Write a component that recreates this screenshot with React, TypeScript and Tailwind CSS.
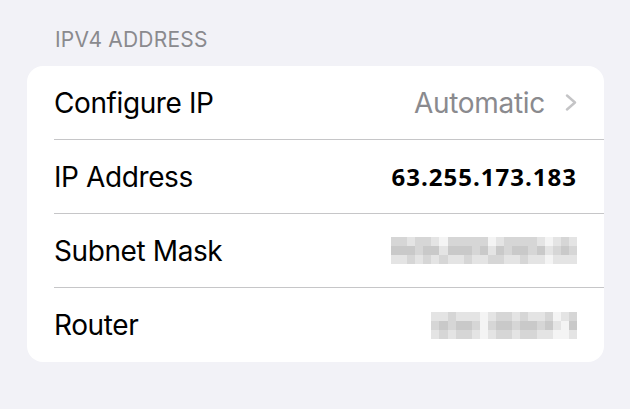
import React from "react";

const shade: Record<number, string> = {
  0: "bg-[#f4f4f4]",
  1: "bg-[#e4e4e4]",
  2: "bg-[#d6d6d6]",
  3: "bg-[#c9c9c9]",
};

const subnet = [
  [2, 2, 1, 2, 2, 1, 0, 2, 2, 2, 2, 2, 0, 1, 2, 2, 2, 2, 1, 0, 1, 2, 1],
  [3, 3, 3, 2, 3, 3, 1, 3, 3, 3, 2, 3, 1, 3, 2, 3, 3, 2, 3, 1, 2, 3, 2],
  [1, 1, 2, 1, 2, 1, 2, 1, 1, 2, 1, 1, 2, 2, 1, 1, 2, 1, 1, 0, 1, 1, 1],
];

const router = [
  [1, 1, 2, 1, 1, 1, 0, 1, 2, 2, 1, 2, 1, 1, 2, 0, 1, 2],
  [2, 3, 2, 3, 3, 2, 0, 2, 3, 3, 2, 3, 3, 2, 3, 1, 0, 3],
  [1, 2, 1, 2, 2, 1, 0, 1, 2, 2, 1, 2, 2, 1, 1, 0, 0, 1],
];

function Mosaic({ data }: { data: number[][] }) {
  return (
    <div className="flex flex-col">
      {data.map((row, r) => (
        <div key={r} className="flex">
          {row.map((v, c) => (
            <div key={c} className={`h-[9px] w-[8.1px] ${shade[v]}`} />
          ))}
        </div>
      ))}
    </div>
  );
}

function Row({
  label,
  children,
  last,
}: {
  label: string;
  children: React.ReactNode;
  last?: boolean;
}) {
  return (
    <div className="pl-[27px]">
      <div
        className={`flex h-[74px] items-center justify-between pr-[27px] ${
          last ? "" : "border-b border-[#c6c6c8]"
        }`}
      >
        <span className="text-[28px] tracking-[-0.4px] text-black">{label}</span>
        {children}
      </div>
    </div>
  );
}

export default function App() {
  return (
    <div
      className="h-[409px] w-[630px] bg-[#f2f2f7] pt-[28px]"
      style={{ fontFamily: "Inter, 'Noto Sans', sans-serif" }}
    >
      <div className="pl-[55px] text-[21px] leading-[24px] tracking-[0.2px] text-[#8a8a8e]">
        IPV4 ADDRESS
      </div>
      <div className="ml-[27px] mr-[26px] mt-[14px] rounded-[16px] bg-white">
        <Row label="Configure IP">
          <div className="flex items-center gap-[20px]">
            <span className="text-[28px] tracking-[-0.3px] text-[#8a8a8e]">
              Automatic
            </span>
            <svg width="12" height="17" viewBox="0 0 12 17" fill="none">
              <path
                d="M2 1.5 L10 8.5 L2 15.5"
                stroke="#c4c4c6"
                strokeWidth="2.4"
                strokeLinecap="round"
                strokeLinejoin="round"
              />
            </svg>
          </div>
        </Row>
        <Row label="IP Address">
          <span
            className="text-[24px] font-bold tracking-[1px] text-black"
            style={{ fontFamily: "'Open Sans', 'Noto Sans', sans-serif" }}
          >
            63.255.173.183
          </span>
        </Row>
        <Row label="Subnet Mask">
          <Mosaic data={subnet} />
        </Row>
        <Row label="Router" last>
          <Mosaic data={router} />
        </Row>
      </div>
    </div>
  );
}
